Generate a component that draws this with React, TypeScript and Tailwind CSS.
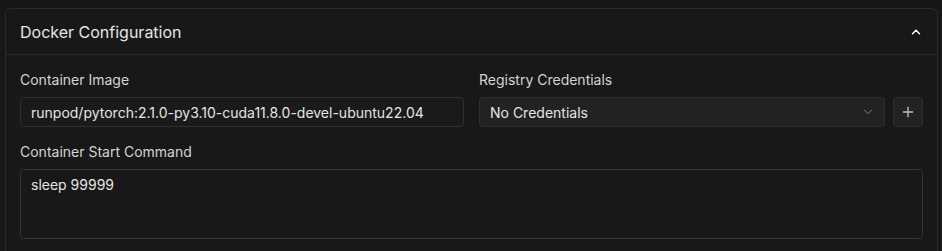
import { ChevronDown, ChevronUp, Plus } from 'lucide-react'

export default function App() {
  return (
    <div className="h-[251px] overflow-hidden bg-[#171717] pl-[5px] pr-[4px] pt-[8px] font-['Inter',sans-serif]">
      <div className="rounded-t-md border border-b-0 border-[#2a2a2a] bg-[#181818]">
        <div className="flex h-[46px] items-center justify-between border-b border-[#2a2a2a] pl-[14px] pr-[14px]">
          <h2 className="text-[16px] text-[#e5e5e5]">Docker Configuration</h2>
          <ChevronUp className="h-[14px] w-[14px] text-white" strokeWidth={2.5} />
        </div>

        <div className="space-y-[15px] px-[14px] pb-4 pt-[15px]">
          <div className="grid grid-cols-2 gap-[15px]">
            <div>
              <label className="block h-5 text-[14px] leading-5 text-[#d4d4d4]">Container Image</label>
              <input
                readOnly
                value="runpod/pytorch:2.1.0-py3.10-cuda11.8.0-devel-ubuntu22.04"
                className="mt-[7px] h-[30px] w-full rounded-[4px] border border-[#2e2e2e] bg-[#1a1a1a] px-[10px] text-[14px] text-[#e5e5e5] outline-none"
              />
            </div>
            <div>
              <label className="block h-5 text-[14px] leading-5 text-[#d4d4d4]">Registry Credentials</label>
              <div className="mt-[7px] flex gap-[8px]">
                <div className="flex h-[30px] flex-1 items-center justify-between rounded-[4px] border border-[#2e2e2e] bg-[#222222] pl-[10px] pr-[9px] text-[14px] text-[#e5e5e5]">
                  <span>No Credentials</span>
                  <ChevronDown className="h-[14px] w-[14px] text-[#8a8a8a]" strokeWidth={1.5} />
                </div>
                <button className="flex h-[30px] w-[30px] items-center justify-center rounded-[4px] border border-[#2e2e2e] bg-[#222222] text-[#bdbdbd]">
                  <Plus className="h-4 w-4" strokeWidth={2} />
                </button>
              </div>
            </div>
          </div>

          <div>
            <label className="block h-5 text-[14px] leading-5 text-[#d4d4d4]">Container Start Command</label>
            <textarea
              readOnly
              value="sleep 99999"
              className="mt-[7px] block h-[70px] w-full resize-none rounded-[4px] border border-[#333333] bg-[#181818] px-[10px] py-[5px] text-[14px] leading-5 text-[#e5e5e5] outline-none"
            />
          </div>
        </div>
      </div>
    </div>
  )
}
